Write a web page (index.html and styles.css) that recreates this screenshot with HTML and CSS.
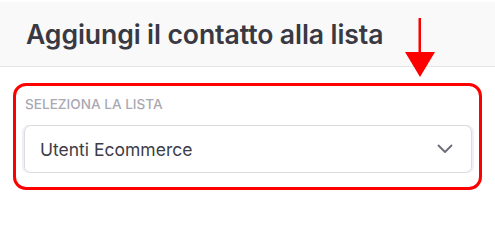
FILE: index.html
```html
<!DOCTYPE html>
<html lang="it">
<head>
<meta charset="utf-8">
<link rel="stylesheet" href="styles.css">
</head>
<body>
<div class="modal">
  <div class="modal-header">
    <h2 class="title">Aggiungi il contatto alla lista</h2>
  </div>
  <div class="modal-body">
    <div class="field">
      <label class="field-label">Seleziona la lista</label>
      <div class="select">
        <span class="select-value">Utenti Ecommerce</span>
        <svg class="chevron" width="16" height="10" viewBox="0 0 16 10" fill="none">
          <path d="M1.5 1.5 L8 8 L14.5 1.5" stroke="#6b6b75" stroke-width="1.8" stroke-linecap="round" stroke-linejoin="round"/>
        </svg>
      </div>
    </div>
  </div>
  <svg class="arrow" width="32" height="60" viewBox="0 0 32 60">
    <rect x="14.5" y="0" width="2.5" height="36" fill="#ff0000"/>
    <polygon points="1,34 31,34 16,59" fill="#ff0000"/>
  </svg>
</div>
</body>
</html>
```
FILE: styles.css
```css
html, body {
  margin: 0;
  padding: 0;
  background: #ffffff;
}
body {
  font-family: Inter, "Noto Sans", sans-serif;
  width: 495px;
  height: 219px;
  overflow: hidden;
}
.modal {
  position: relative;
  width: 495px;
}
.modal-header {
  margin-top: 2px;
  height: 65px;
  background: #f9f9f9;
  border-bottom: 1px solid #e6e6e6;
  display: flex;
  align-items: center;
  padding-left: 26px;
  box-sizing: border-box;
}
.title {
  margin: 0;
  font-size: 26.6px;
  font-weight: 600;
  color: #393943;
  letter-spacing: -0.1px;
}
.modal-body {
  padding: 16px 13px 0 13px;
}
.field {
  width: 469px;
  box-sizing: border-box;
  border: 3px solid #ff0000;
  border-radius: 13px;
  padding: 10px 7px 14px 8px;
}
.field-label {
  display: block;
  text-transform: uppercase;
  font-size: 13.6px;
  font-weight: 500;
  color: #a9a9b3;
  line-height: 16px;
  margin-bottom: 13px;
  padding-left: 1px;
}
.select {
  height: 48px;
  box-sizing: border-box;
  border: 1px solid #dcdce0;
  border-radius: 7px;
  background: #fff;
  box-shadow: -2px 0 0 #eef0f8, 2px 0 0 #eef0f8;
  display: flex;
  align-items: center;
  justify-content: space-between;
  padding: 0 18px 0 15px;
}
.select-value {
  font-size: 17.5px;
  color: #3d3d47;
}
.arrow {
  position: absolute;
  left: 404px;
  top: 16px;
}
```
